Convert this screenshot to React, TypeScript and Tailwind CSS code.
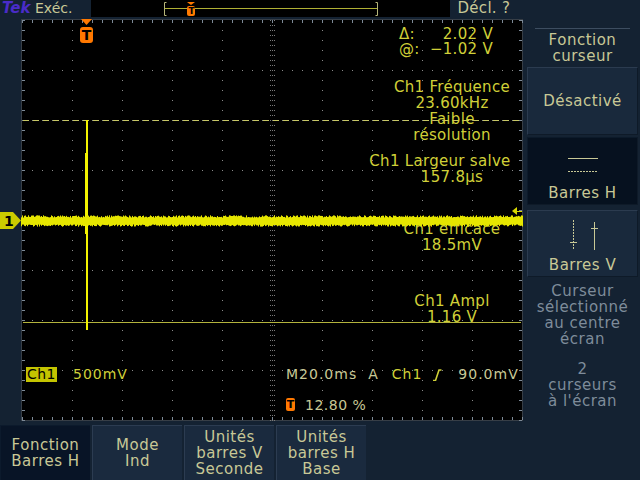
import React from "react";

const Y = "text-[#d0d038]";

function mkNoise(): string {
  let s = 12345;
  const r = () => {
    s = (s * 16807) % 2147483647;
    return s / 2147483647;
  };
  let d = "";
  for (let x = 0; x <= 501; x++) {
    const a = 198.5 - r() * 2.2;
    const b = 205.5 + r() * 2.2;
    d += `M${x}.5 ${a.toFixed(1)}V${b.toFixed(1)}`;
  }
  return d;
}

function Grid() {
  const v: React.ReactNode[] = [];
  for (let k = 1; k <= 9; k++) {
    v.push(
      <line key={"v" + k} x1={50 * k + 1.5} y1={1} x2={50 * k + 1.5} y2={401} stroke="#8a8a8a" strokeDasharray="1 9" />
    );
  }
  for (let k = 1; k <= 7; k++) {
    v.push(
      <line key={"h" + k} x1={1} y1={50 * k + 1.5} x2={501} y2={50 * k + 1.5} stroke="#8a8a8a" strokeDasharray="1 9" />
    );
  }
  for (let i = 0; i <= 100; i++) {
    const x = 1.5 + i * 5;
    v.push(<line key={"ct" + i} x1={x} y1={199} x2={x} y2={204} stroke="#7a7a7a" strokeDasharray="1 1" />);
  }
  for (let i = 0; i <= 80; i++) {
    const y = 1.5 + i * 5;
    v.push(<line key={"cv" + i} x1={249} y1={y} x2={254} y2={y} stroke="#7a7a7a" strokeDasharray="1 1" />);
  }
  for (let i = 0; i <= 50; i++) {
    const x = 1.5 + i * 10;
    v.push(<line key={"bt" + i} x1={x} y1={1} x2={x} y2={4} stroke="#7d8a97" />);
    v.push(<line key={"bb" + i} x1={x} y1={398} x2={x} y2={401} stroke="#7d8a97" />);
  }
  for (let i = 0; i <= 40; i++) {
    const y = 1.5 + i * 10;
    v.push(<line key={"bl" + i} x1={1} y1={y} x2={4} y2={y} stroke="#7d8a97" />);
    v.push(<line key={"br" + i} x1={498} y1={y} x2={501} y2={y} stroke="#7d8a97" />);
  }
  return (
    <svg width="502" height="402" className="absolute left-0 top-0">
      <rect x="0.5" y="0.5" width="501" height="401" fill="none" stroke="#6f7d8c" strokeDasharray="1 1" />
      {v}
    </svg>
  );
}

function MenuBtn({ selected, children, h, className = "" }: { selected?: boolean; children: React.ReactNode; h: string; className?: string }) {
  return (
    <div
      className={`${h} ${className} flex flex-col items-center text-center leading-[16px] border-t border-l ${
        selected ? "bg-[#06111f] border-[#0c1a2a]" : "bg-[#19293c] border-[#2b3b4f]"
      } border-r border-b border-r-[#0e1a28] border-b-[#0e1a28]`}
    >
      {children}
    </div>
  );
}

export default function App() {
  const noise = React.useMemo(mkNoise, []);
  return (
    <div className="w-[640px] h-[480px] bg-[#142232] overflow-hidden flex flex-col text-[15px] tracking-[0.3px] text-[#c8c896] font-['DejaVu_Sans',sans-serif]">
      {/* top bar */}
      <div className="h-[19px] flex items-start shrink-0">
        <span className="ml-[2px] w-[31px] text-[15px] font-bold italic text-[#4a2cc8] leading-[17px] tracking-normal">Tek</span>
        <span className="ml-[2px] leading-[17px] text-[14px] tracking-normal">Exéc.</span>
        <div className="ml-[19px] w-[359px] h-[17px] bg-black relative">
          <svg width="359" height="17" className="absolute left-0 top-0">
            <path d="M75.5 2.5H73.5V15.5H75.5" fill="none" stroke="#b6b67a" />
            <path d="M284.5 2.5H286.5V15.5H284.5" fill="none" stroke="#b6b67a" />
            <line x1="74" y1="8.5" x2="286" y2="8.5" stroke="#b0b034" />
            <polygon points="96,2 104,2 100,5" fill="#ff7a00" />
          </svg>
          <div className="absolute left-[96px] top-[6px] w-[8px] h-[10px] bg-[#ff7a00] rounded-[2px] text-black text-[9px] font-bold leading-[10px] text-center tracking-normal">
            T
          </div>
        </div>
        <span className="ml-[7px] leading-[17px]">Décl. ?</span>
      </div>

      {/* middle */}
      <div className="h-[402px] flex shrink-0">
        <div className="w-[21px] relative">
          <div className="absolute left-0 top-[193px] w-[21px] h-[17px] bg-[#cccc00] [clip-path:polygon(0_0,62%_0,100%_50%,62%_100%,0_100%)] flex items-center pl-[4px] text-black font-bold text-[14px] leading-none">
            1
          </div>
        </div>
        <div className="w-[502px] h-[402px] bg-black relative">
          <Grid />
          <svg width="502" height="402" className="absolute left-0 top-0">
            <line x1="2" y1="101.5" x2="500" y2="101.5" stroke="#c8c864" strokeDasharray="6 4" />
            <line x1="2" y1="303.5" x2="500" y2="303.5" stroke="#b4b43c" />
            <line x1="66" y1="101" x2="66" y2="311" stroke="#f2f200" strokeWidth="2" />
            <line x1="65.5" y1="134" x2="65.5" y2="215" stroke="#f2f200" strokeWidth="3" />
          </svg>
          <div className="absolute left-[59px] top-0 w-[13px] flex flex-col items-center">
            <svg width="11" height="6">
              <polygon points="0,0 11,0 5.5,6" fill="#ff7800" />
            </svg>
            <div className="mt-[2px] w-[13px] h-[16px] bg-[#ff7800] rounded-[3px] text-black font-bold text-[14px] leading-[16px] text-center tracking-normal">T</div>
          </div>

          {/* readouts */}
          <div className={`absolute left-[378px] top-[8px] leading-[15px] whitespace-nowrap ${Y}`}>
            <div className="flex">
              <span className="w-[30px]">Δ:</span>
              <span className="w-[64px] text-right">2.02 V</span>
            </div>
            <div className="flex">
              <span className="w-[30px]">@:</span>
              <span className="w-[64px] text-right">−1.02 V</span>
            </div>
          </div>
          <div className={`absolute left-[356px] top-[60px] w-[150px] text-center leading-[16px] ${Y}`}>
            <div>Ch1 Fréquence</div>
            <div>23.60kHz</div>
            <div>Faible</div>
            <div>résolution</div>
          </div>
          <div className={`absolute left-[344px] top-[134px] w-[150px] flex justify-center whitespace-nowrap leading-[16px] ${Y}`}>
            Ch1 Largeur salve
          </div>
          <div className={`absolute left-[356px] top-[150px] w-[150px] text-center leading-[16px] ${Y}`}>157.8µs</div>
          <div className={`absolute left-[356px] top-[202px] w-[150px] text-center leading-[16px] ${Y}`}>
            <div>Ch1 efficace</div>
            <div>18.5mV</div>
          </div>
          <div className={`absolute left-[356px] top-[274px] w-[150px] text-center leading-[16px] ${Y}`}>
            <div>Ch1 Ampl</div>
            <div>1.16 V</div>
          </div>

          <svg width="502" height="402" className="absolute left-0 top-0">
            <rect x="1" y="199" width="500" height="6" fill="#eeee00" />
            <path d={noise} stroke="#e6e600" strokeWidth="1" />
            <polygon points="491,192 496,188 496,196" fill="#d8d800" />
            <line x1="496" y1="192.5" x2="501" y2="192.5" stroke="#d8d800" />
          </svg>

          {/* bottom readouts */}
          <div className="absolute left-[5px] top-[348px] w-[31px] h-[15px] bg-[#c4c400] text-black text-center text-[14px] leading-[15px] tracking-[0.5px]">Ch1</div>
          <div className={`absolute left-[52px] top-[347px] text-[14px] leading-[17px] tracking-[1px] ${Y}`}>500mV</div>
          <div className="absolute left-[265px] top-[347px] flex items-center text-[14px] leading-[17px] tracking-[1px] whitespace-nowrap">
            <span>M20.0ms</span>
            <span className="ml-[11px]">A</span>
            <span className={`ml-[13px] ${Y}`}>Ch1</span>
            <svg width="9" height="12" className="ml-[11px]">
              <path d="M0 11.5H2.5L6 1H8.5" fill="none" stroke="#d0d038" strokeWidth="1.6" />
            </svg>
            <span className="ml-[16px]">90.0mV</span>
          </div>
          <div className="absolute left-[265px] top-[379px] w-[9px] h-[13px] bg-[#ff7800] rounded-[2px] text-black font-bold text-[11px] leading-[13px] text-center tracking-normal">T</div>
          <div className="absolute left-[284px] top-[378px] text-[14px] leading-[17px] tracking-[0.5px]">12.80 %</div>
        </div>

        {/* right menu */}
        <div className="ml-[4px] w-[111px] flex flex-col tracking-[0.5px]">
          <div className="mt-[9px] mx-[8px] h-px bg-[#3d4d60]" />
          <div className="h-[38px] flex flex-col items-center justify-center text-center leading-[16px]">
            <div>Fonction</div>
            <div>curseur</div>
          </div>
          <MenuBtn h="h-[68px]" className="justify-center">
            <div>Désactivé</div>
          </MenuBtn>
          <MenuBtn selected h="h-[68px] mt-[2px]">
            <svg width="32" height="16" className="mt-[19px]">
              <line x1="1" y1="1.5" x2="31" y2="1.5" stroke="#c8c896" />
              <line x1="1" y1="14.5" x2="31" y2="14.5" stroke="#c8c896" strokeDasharray="2 1" />
            </svg>
            <div className="mt-[12px]">Barres H</div>
          </MenuBtn>
          <MenuBtn h="h-[67px] mt-[5px]">
            <svg width="30" height="31" className="mt-[9px]">
              <line x1="5.5" y1="0" x2="5.5" y2="30" stroke="#c8c896" strokeDasharray="2 1" />
              <line x1="2" y1="22.5" x2="9" y2="22.5" stroke="#c8c896" />
              <line x1="26.5" y1="2" x2="26.5" y2="30" stroke="#c8c896" />
              <line x1="23" y1="8.5" x2="30" y2="8.5" stroke="#c8c896" />
            </svg>
            <div className="mt-[6px]">Barres V</div>
          </MenuBtn>
          <div className="mt-[6px] text-center leading-[16px] text-[#7e8c9a]">
            <div>Curseur</div>
            <div>sélectionné</div>
            <div>au centre</div>
            <div>écran</div>
            <div className="mt-[14px]">2</div>
            <div>curseurs</div>
            <div>à l'écran</div>
          </div>
        </div>
      </div>

      {/* bottom menu */}
      <div className="flex-1 pt-[4px] flex gap-[2px] tracking-[0.5px]">
        {[
          { t: ["Fonction", "Barres H"], sel: true },
          { t: ["Mode", "Ind"] },
          { t: ["Unités", "barres V", "Seconde"] },
          { t: ["Unités", "barres H", "Base"] },
        ].map((b, i) => (
          <div
            key={i}
            className={`w-[90px] h-[55px] flex flex-col items-center justify-center text-center leading-[16px] border-t border-l ${
              b.sel ? "bg-[#081426] border-[#0c1a2c]" : "bg-[#1a2a3e] border-[#2c3c51]"
            }`}
          >
            {b.t.map((l) => (
              <div key={l}>{l}</div>
            ))}
          </div>
        ))}
      </div>
    </div>
  );
}
